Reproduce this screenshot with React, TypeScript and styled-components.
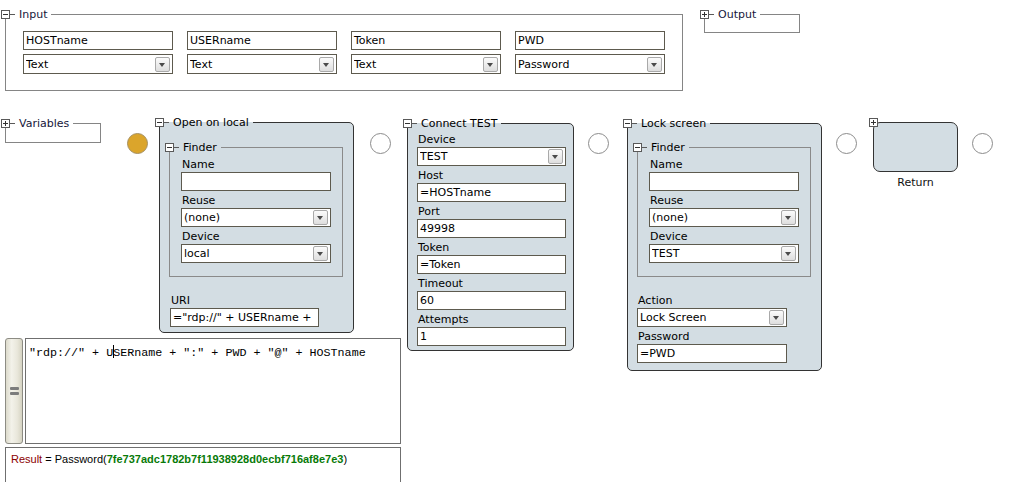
import React from "react";
import styled, { createGlobalStyle } from "styled-components";

const PANEL = "#d3dde3";

const GlobalStyle = createGlobalStyle`
  html, body { margin: 0; padding: 0; background: #ffffff; }
  body {
    font-family: "DejaVu Sans", Verdana, sans-serif;
    font-size: 11px;
    color: #000;
  }
  #root { width: 1014px; height: 482px; }
`;

const Screen = styled.div`
  position: relative;
  width: 1014px;
  height: 482px;
  overflow: hidden;
  background: #fff;
`;

const TopRow = styled.div`
  display: flex;
  align-items: flex-start;
  padding: 14px 0 0 5px;
`;

const Group = styled.div<{ $w: number; $h: number; $ml?: number; $mt?: number }>`
  position: relative;
  box-sizing: border-box;
  flex: none;
  width: ${(p) => p.$w}px;
  height: ${(p) => p.$h}px;
  margin: ${(p) => p.$mt ?? 0}px 0 0 ${(p) => p.$ml ?? 0}px;
  border: 1px solid #858585;
`;

const InputGrid = styled.div`
  display: grid;
  grid-template-columns: repeat(4, 150px);
  column-gap: 14px;
  row-gap: 4px;
  padding: 16px 0 0 17px;
`;

const Legend = styled.div<{ $bg: string }>`
  position: absolute;
  top: -5px;
  left: -5px;
  height: 9px;
  display: flex;
  align-items: center;
  padding-right: 4px;
  background: ${(p) => p.$bg};
  z-index: 1;
`;

const Toggle = styled.div<{ $plus?: boolean }>`
  position: relative;
  box-sizing: border-box;
  flex: none;
  width: 9px;
  height: 9px;
  border: 1px solid #595959;
  background: #fff;
  &::before {
    content: "";
    position: absolute;
    left: 1px;
    top: 3px;
    width: 5px;
    height: 1px;
    background: #333;
  }
  &::after {
    content: "";
    display: ${(p) => (p.$plus ? "block" : "none")};
    position: absolute;
    left: 3px;
    top: 1px;
    width: 1px;
    height: 5px;
    background: #333;
  }
`;

const Stub = styled.div`
  flex: none;
  width: 5px;
  height: 1px;
  background: #595959;
`;

const LegendText = styled.span<{ $dark?: boolean }>`
  padding-left: 4px;
  line-height: 13px;
  white-space: nowrap;
  color: ${(p) => (p.$dark ? "#000" : "#16163a")};
`;

const TextBox = styled.div<{ $w: number; $h: number; $ml?: number }>`
  box-sizing: border-box;
  flex: none;
  width: ${(p) => p.$w}px;
  height: ${(p) => p.$h}px;
  margin-left: ${(p) => p.$ml ?? 0}px;
  border: 1px solid #5d5a4e;
  background: #fff;
  padding: 0 2px;
  line-height: ${(p) => p.$h - 1}px;
  white-space: nowrap;
  overflow: hidden;
`;

const SelectBox = styled(TextBox)`
  display: flex;
  align-items: center;
  padding-right: 2px;
`;

const SelectValue = styled.span`
  flex: 1;
  overflow: hidden;
  padding-top: 1px;
`;

const DropButton = styled.div`
  position: relative;
  box-sizing: border-box;
  flex: none;
  width: 15px;
  height: 15px;
  border: 1px solid #a9a9a9;
  border-radius: 2px;
  background: linear-gradient(#fbfbfb, #dedede);
  &::after {
    content: "";
    position: absolute;
    left: 3px;
    top: 5px;
    border-left: 3.5px solid transparent;
    border-right: 3.5px solid transparent;
    border-top: 4px solid #4a4a4a;
  }
`;

const DiagramRow = styled.div`
  display: flex;
  align-items: flex-start;
  margin-top: 31px;
`;

const Connector = styled.div<{ $ml: number; $active?: boolean }>`
  flex: none;
  box-sizing: border-box;
  width: 21px;
  height: 21px;
  border-radius: 50%;
  margin: 11px 0 0 ${(p) => p.$ml}px;
  border: 1px solid ${(p) => (p.$active ? "#a59062" : "#8c8c8c")};
  background: ${(p) => (p.$active ? "#dba52b" : "#fff")};
`;

const NodePanel = styled.div<{ $w: number; $ml: number; $mt?: number; $pad: string }>`
  position: relative;
  box-sizing: border-box;
  flex: none;
  width: ${(p) => p.$w}px;
  margin: ${(p) => p.$mt ?? 0}px 0 0 ${(p) => p.$ml}px;
  padding: ${(p) => p.$pad};
  background: ${PANEL};
  border: 1px solid #333;
  border-radius: 5px;
  display: flex;
  flex-direction: column;
`;

const FinderGroup = styled.div`
  position: relative;
  box-sizing: border-box;
  width: 174px;
  border: 1px solid #8a8a8a;
  padding: 7px 11px 13px 11px;
  display: flex;
  flex-direction: column;
`;

const Section = styled.div<{ $mt: number }>`
  display: flex;
  flex-direction: column;
  margin-top: ${(p) => p.$mt}px;
`;

const FieldLabel = styled.div<{ $ml?: number }>`
  box-sizing: border-box;
  height: 17px;
  padding: 2px 0 0 ${(p) => 1 + (p.$ml ?? 0)}px;
  line-height: 15px;
  white-space: nowrap;
`;

const ReturnNode = styled.div<{ $ml: number }>`
  flex: none;
  margin-left: ${(p) => p.$ml}px;
  display: flex;
  flex-direction: column;
  align-items: center;
`;

const ReturnBox = styled.div`
  position: relative;
  box-sizing: border-box;
  width: 85px;
  height: 50px;
  border: 1px solid #333;
  border-radius: 7px;
  background: ${PANEL};
`;

const CornerToggle = styled(Toggle)`
  position: absolute;
  top: -5px;
  left: -5px;
`;

const ReturnLabel = styled.div`
  margin-top: 2px;
  line-height: 17px;
  color: #111;
`;

const EditorPane = styled.div`
  position: absolute;
  left: 5px;
  top: 338px;
  width: 396px;
  display: flex;
  flex-direction: column;
`;

const EditorRow = styled.div`
  display: flex;
  gap: 2px;
  height: 106px;
`;

const Gutter = styled.div`
  box-sizing: border-box;
  flex: none;
  width: 18px;
  border: 1px solid #8d8c84;
  border-radius: 3px;
  background: linear-gradient(to right, #dddbcc, #f3f2ea 35%, #e9e7db 70%, #d6d4c3);
  display: flex;
  flex-direction: column;
  align-items: center;
  justify-content: center;
  gap: 2px;
`;

const GripBar = styled.div`
  width: 9px;
  height: 3px;
  background: #7c7c7c;
  border-radius: 1px;
`;

const CodeBox = styled.div`
  box-sizing: border-box;
  flex: 1;
  border: 1px solid #6f6f6f;
  background: #fff;
  padding: 6px 3px;
  font-family: "Liberation Mono", "Courier New", monospace;
  font-size: 11.7px;
  line-height: 14px;
  white-space: pre;
  color: #000;
`;

const Caret = styled.span`
  display: inline-block;
  width: 1px;
  height: 13px;
  margin-right: -1px;
  vertical-align: -2px;
  background: #000;
`;

const ResultBox = styled.div`
  box-sizing: border-box;
  margin-top: 3px;
  height: 40px;
  border: 1px solid #6f6f6f;
  background: #fff;
  padding: 4px 5px;
  font-family: "Liberation Sans", Arial, sans-serif;
  font-size: 11px;
  line-height: 14px;
  white-space: nowrap;
`;

const ResultKey = styled.span`
  color: #8b0000;
`;

const ResultValue = styled.span`
  color: #087a08;
  font-weight: bold;
`;

function GroupLegend({ text, bg, plus, dark }: { text: string; bg: string; plus?: boolean; dark?: boolean }) {
  return (
    <Legend $bg={bg}>
      <Toggle $plus={plus} />
      <Stub />
      <LegendText $dark={dark}>{text}</LegendText>
    </Legend>
  );
}

function Select({ value, w, h, ml }: { value: string; w: number; h: number; ml?: number }) {
  return (
    <SelectBox $w={w} $h={h} $ml={ml}>
      <SelectValue>{value}</SelectValue>
      <DropButton />
    </SelectBox>
  );
}

function Field({ label, value = "", select, w = 149, ml }: { label: string; value?: string; select?: boolean; w?: number; ml?: number }) {
  return (
    <>
      <FieldLabel $ml={ml}>{label}</FieldLabel>
      {select ? (
        <Select value={value} w={w} h={19} ml={ml} />
      ) : (
        <TextBox $w={w} $h={19} $ml={ml}>
          {value}
        </TextBox>
      )}
    </>
  );
}

function Finder({ device }: { device: string }) {
  return (
    <FinderGroup>
      <GroupLegend text="Finder" bg={PANEL} dark />
      <Field label="Name" w={150} />
      <Field label="Reuse" value="(none)" select w={150} />
      <Field label="Device" value={device} select w={150} />
    </FinderGroup>
  );
}

const titleBg = `linear-gradient(to bottom, #fff 0, #fff 4px, ${PANEL} 4px)`;

const inputs = [
  { name: "HOSTname", type: "Text" },
  { name: "USERname", type: "Text" },
  { name: "Token", type: "Text" },
  { name: "PWD", type: "Password" },
];

export default function App() {
  return (
    <Screen>
      <GlobalStyle />
      <TopRow>
        <Group $w={678} $h={77}>
          <GroupLegend text="Input" bg="#fff" />
          <InputGrid>
            {inputs.map((i) => (
              <TextBox key={i.name} $w={150} $h={19}>
                {i.name}
              </TextBox>
            ))}
            {inputs.map((i) => (
              <Select key={i.name + "t"} value={i.type} w={150} h={20} />
            ))}
          </InputGrid>
        </Group>
        <Group $w={96} $h={19} $ml={21}>
          <GroupLegend text="Output" bg="#fff" plus />
        </Group>
      </TopRow>

      <DiagramRow>
        <Group $w={96} $h={20} $ml={5} $mt={1}>
          <GroupLegend text="Variables" bg="#fff" plus />
        </Group>

        <Connector $ml={26} $active />

        <NodePanel $w={195} $ml={11} $pad="24px 10px 5px 9px">
          <GroupLegend text="Open on local" bg={titleBg} dark />
          <Finder device="local" />
          <Section $mt={14}>
            <Field label="URI" value={'="rdp://" + USERname +'} ml={1} />
          </Section>
        </NodePanel>

        <Connector $ml={16} />

        <NodePanel $w={167} $ml={16} $mt={1} $pad="6px 7px 4px 9px">
          <GroupLegend text="Connect TEST" bg={titleBg} dark />
          <Field label="Device" value="TEST" select />
          <Field label="Host" value="=HOSTname" />
          <Field label="Port" value="49998" />
          <Field label="Token" value="=Token" />
          <Field label="Timeout" value="60" />
          <Field label="Attempts" value="1" />
        </NodePanel>

        <Connector $ml={14} />

        <NodePanel $w={195} $ml={18} $mt={1} $pad="23px 10px 7px 9px">
          <GroupLegend text="Lock screen" bg={titleBg} dark />
          <Finder device="TEST" />
          <Section $mt={14}>
            <Field label="Action" value="Lock Screen" select w={150} />
            <Field label="Password" value="=PWD" w={150} />
          </Section>
        </NodePanel>

        <Connector $ml={14} />

        <ReturnNode $ml={16}>
          <ReturnBox>
            <CornerToggle $plus />
          </ReturnBox>
          <ReturnLabel>Return</ReturnLabel>
        </ReturnNode>

        <Connector $ml={14} />
      </DiagramRow>

      <EditorPane>
        <EditorRow>
          <Gutter>
            <GripBar />
            <GripBar />
          </Gutter>
          <CodeBox>
            {'"rdp://" + U'}
            <Caret />
            {'SERname + ":" + PWD + "@" + HOSTname'}
          </CodeBox>
        </EditorRow>
        <ResultBox>
          <ResultKey>Result</ResultKey> = Password(
          <ResultValue>7fe737adc1782b7f11938928d0ecbf716af8e7e3</ResultValue>)
        </ResultBox>
      </EditorPane>
    </Screen>
  );
}
